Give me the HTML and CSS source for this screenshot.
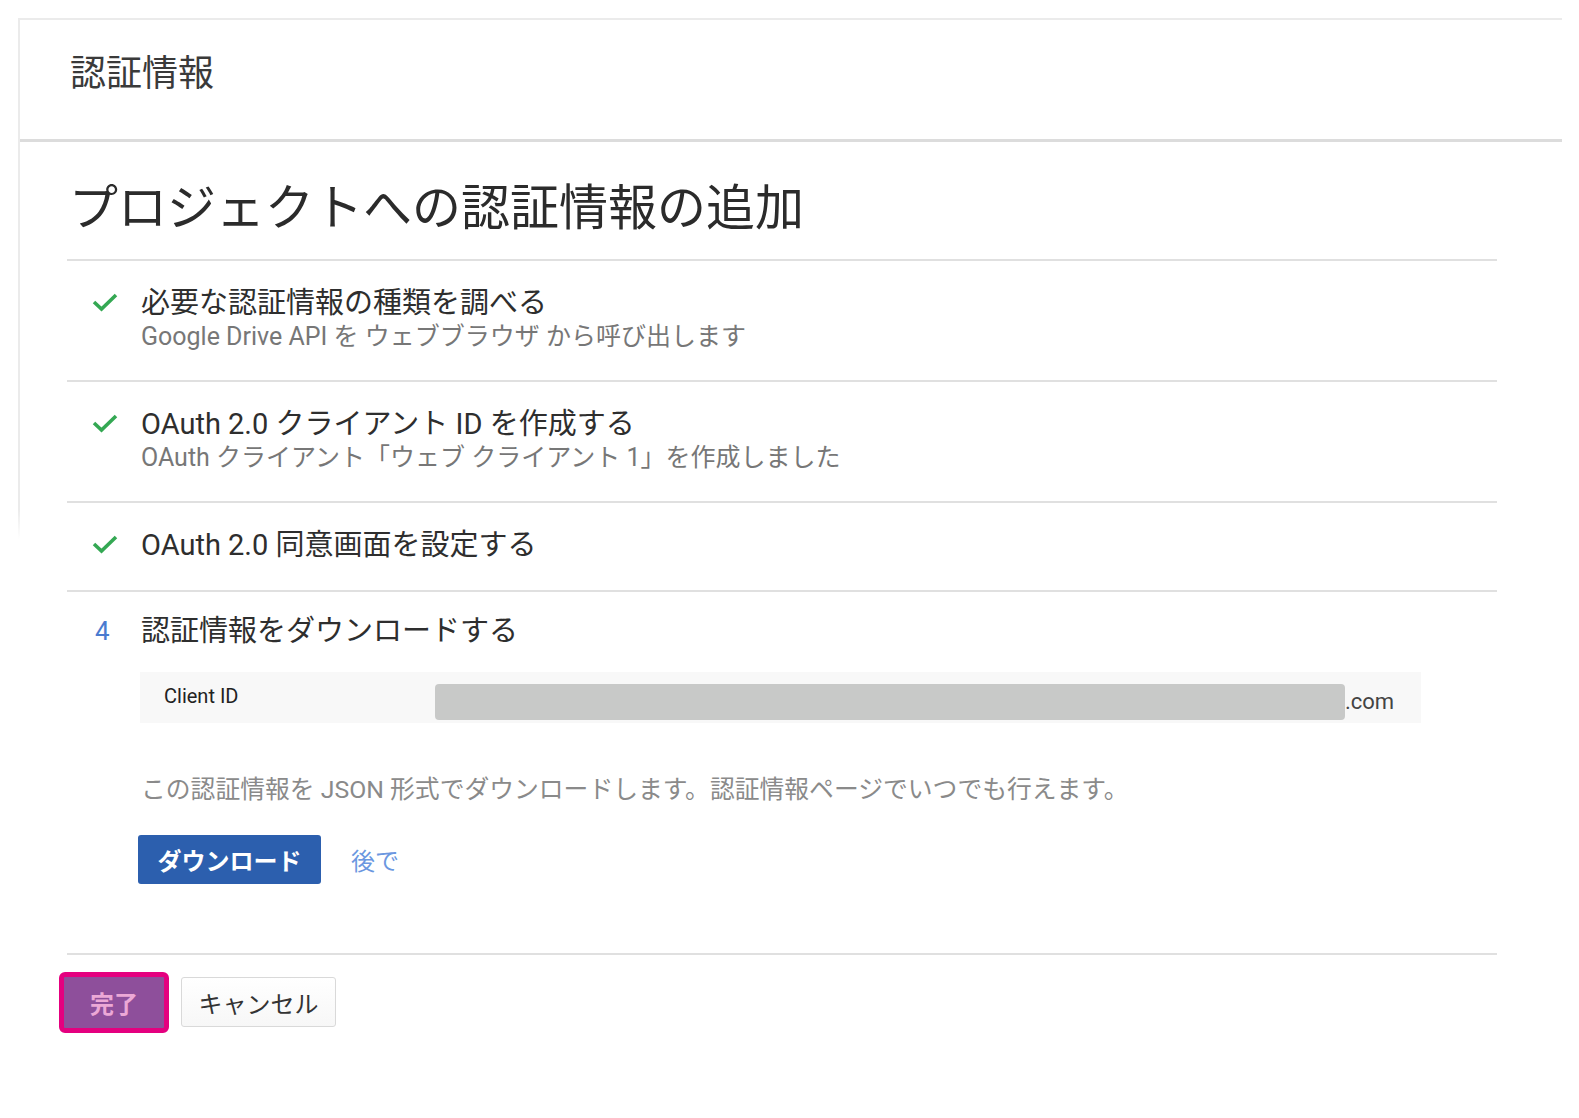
FILE: index.html
```html
<!DOCTYPE html>
<html lang="ja">
<head>
    <meta charset="UTF-8">
    <meta name="viewport" content="width=device-width, initial-scale=1.0">
    <title>認証情報</title>
    <link rel="stylesheet" href="styles.css">
</head>
<body>

    <div class="panel">
        <div class="panel-header">認証情報</div>

        <div class="content">
            <h1>プロジェクトへの認証情報の追加</h1>

            <div class="step">
                <div class="step-icon">
                    <svg class="check" viewBox="0 0 26 20"><polyline points="2,10 9.5,17 24,3"/></svg>
                </div>
                <div class="step-body">
                    <div class="step-title">必要な認証情報の種類を調べる</div>
                    <div class="step-sub">Google Drive API を ウェブブラウザ から呼び出します</div>
                </div>
            </div>

            <div class="step">
                <div class="step-icon">
                    <svg class="check" viewBox="0 0 26 20"><polyline points="2,10 9.5,17 24,3"/></svg>
                </div>
                <div class="step-body">
                    <div class="step-title">OAuth 2.0 クライアント ID を作成する</div>
                    <div class="step-sub">OAuth クライアント「ウェブ クライアント 1」を作成しました</div>
                </div>
            </div>

            <div class="step">
                <div class="step-icon">
                    <svg class="check" viewBox="0 0 26 20"><polyline points="2,10 9.5,17 24,3"/></svg>
                </div>
                <div class="step-body">
                    <div class="step-title">OAuth 2.0 同意画面を設定する</div>
                </div>
            </div>

            <div class="step step-last">
                <div class="step-icon">
                    <span class="step-num">4</span>
                </div>
                <div class="step-body">
                    <div class="step-title">認証情報をダウンロードする</div>

                    <div class="client-box">
                        <span class="client-label">Client ID</span>
                        <span class="client-hidden"></span>
                        <span class="client-tail">.com</span>
                    </div>

                    <p class="note">この認証情報を JSON 形式でダウンロードします。認証情報ページでいつでも行えます。</p>

                    <div class="download-row">
                        <button class="btn-download">ダウンロード</button>
                        <a class="later" href="#">後で</a>
                    </div>
                </div>
            </div>

            <div class="footer">
                <button class="btn-done"><span>完了</span></button>
                <button class="btn-cancel">キャンセル</button>
            </div>
        </div>
    </div>

</body>
</html>
```

FILE: styles.css
```css
body {
    margin: 0;
    background: #fff;
    color: #333;
    font-family: Roboto, "Noto Sans CJK JP", sans-serif;
}
.panel {
    margin: 18px 17px 0 18px;
    padding-bottom: 60px;
    border-style: solid;
    border-width: 2px 0 0 2px;
    border-image: linear-gradient(to bottom, #ebebeb 490px, rgba(235, 235, 235, 0) 520px) 1;
}
.panel-header {
    height: 122px;
    box-sizing: border-box;
    padding: 33px 0 0 50px;
    font-size: 36px;
    line-height: 1.2;
    color: #3a3a3a;
    border-bottom: 3px solid #dcdcdc;
}
.content {
    margin-left: 47px;
    width: 1430px;
}
h1 {
    margin: 0;
    padding: 38px 0 20px 2px;
    font-size: 49px;
    font-weight: 400;
    line-height: 1.2;
    color: #2b2b2b;
    border-bottom: 2px solid #e0e0e0;
}
.step {
    display: flex;
    padding: 24px 0 27px;
    border-bottom: 2px solid #e0e0e0;
}
.step-last {
    padding-top: 21px;
    padding-bottom: 69px;
}
.step-icon {
    width: 74px;
    flex-shrink: 0;
    padding-left: 25px;
    box-sizing: border-box;
}
.check {
    width: 26px;
    height: 20px;
    margin-top: 7px;
}
.check polyline {
    fill: none;
    stroke: #34a853;
    stroke-width: 3.6;
}
.step-num {
    display: block;
    margin-left: 3px;
    font-size: 26px;
    line-height: 36px;
    color: #4a7bd0;
}
.step-title {
    font-size: 29px;
    line-height: 36px;
    color: #2e2e2e;
}
.step-sub {
    font-size: 25px;
    line-height: 32px;
    color: #777;
}
.client-box {
    display: flex;
    align-items: center;
    width: 1281px;
    height: 51px;
    box-sizing: border-box;
    margin: 23px 0 0 -1px;
    padding-top: 9px;
    background: #f8f8f8;
}
.client-label {
    align-self: flex-start;
    width: 295px;
    flex-shrink: 0;
    box-sizing: border-box;
    padding-left: 24px;
    margin-top: 3px;
    font-size: 20px;
    line-height: 24px;
    color: #222;
}
.client-hidden {
    width: 910px;
    height: 36px;
    border-radius: 4px;
    background: #c8c9c8;
}
.client-tail {
    font-size: 22px;
    color: #444;
}
.note {
    margin: 51px 0 0;
    font-size: 24.8px;
    line-height: 31px;
    color: #8a8a8a;
}
.download-row {
    display: flex;
    align-items: center;
    gap: 30px;
    margin-top: 30px;
}
.btn-download {
    height: 49px;
    width: 183px;
    margin-left: -3px;
    border: none;
    border-radius: 3px;
    background: #2c5fae;
    color: #fff;
    font-family: inherit;
    font-size: 24px;
    font-weight: 700;
}
.later {
    font-size: 24px;
    color: #6b97e0;
    text-decoration: none;
}
.footer {
    display: flex;
    align-items: center;
    gap: 12px;
    margin-left: -2px;
    padding-top: 17px;
}
.btn-done {
    width: 110px;
    height: 61px;
    margin-left: -6px;
    padding: 0;
    border: 5px solid #e4007f;
    border-radius: 6px;
    background: #8e4f9b;
    color: #eca8d6;
    font-family: inherit;
    font-size: 24px;
    font-weight: 700;
}
.btn-cancel {
    width: 155px;
    height: 50px;
    border: 1px solid #d9d9d9;
    border-radius: 3px;
    background: linear-gradient(#fff, #f7f7f7);
    color: #333;
    font-family: inherit;
    font-size: 24px;
}
```
